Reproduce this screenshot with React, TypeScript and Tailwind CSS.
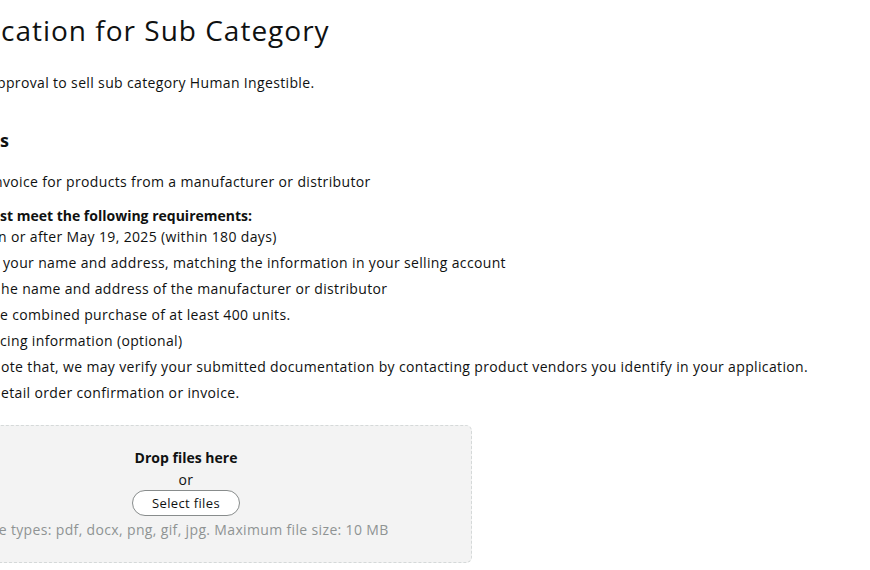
export default function App() {
  // lines of the page as they show in the cropped view
  const items = [
    { text: "n or after May 19, 2025 (within 180 days)", cls: "-ml-[2px]" },
    { text: "your name and address, matching the information in your selling account", cls: "ml-[3px]" },
    { text: "he name and address of the manufacturer or distributor", cls: "ml-[1px]" },
    { text: "e combined purchase of at least 400 units.", cls: "ml-0" },
    { text: "cing information (optional)", cls: "ml-0" },
    { text: "ote that, we may verify your submitted documentation by contacting product vendors you identify in your application.", cls: "ml-[1px]" },
    { text: "etail order confirmation or invoice.", cls: "ml-[1px]" },
  ]

  return (
    <div className="w-[870px] h-[570px] overflow-hidden bg-white text-[#0f1111] font-['Open_Sans',Arial,sans-serif] tracking-[0.35px]">
      <h1 className="mt-[12px] h-[36px] leading-[36px] text-[28px] ml-[1px] tracking-[1px] whitespace-nowrap">
        cation for Sub Category
      </h1>

      <p className="mt-[25px] h-[20px] leading-[20px] text-[14px] -ml-[3px] whitespace-nowrap">
        pproval to sell sub category Human Ingestible.
      </p>

      <h3 className="mt-[35px] h-[24px] leading-[24px] text-[18px] font-bold tracking-normal">s</h3>

      <p className="mt-[20px] h-[20px] leading-[20px] text-[14px] -ml-[6px] whitespace-nowrap">
        nvoice for products from a manufacturer or distributor
      </p>

      <p className="mt-[14px] h-[20px] leading-[20px] text-[14px] font-bold tracking-normal whitespace-nowrap">
        st meet the following requirements:
      </p>

      <ul className="mt-[1px] flex flex-col gap-[6px] text-[14px]">
        {items.map((item, i) => (
          <li key={i} className={`h-[20px] leading-[20px] whitespace-nowrap ${item.cls}`}>
            {item.text}
          </li>
        ))}
      </ul>

      {/* upload area */}
      <div className="mt-[22px] -ml-[100px] w-[572px] h-[138px] rounded-[6px] border border-dashed border-[#d5d9d9] bg-[#f3f3f3] flex flex-col items-center pt-[22px]">
        <div className="h-[20px] leading-[20px] text-[14px] font-bold tracking-normal">Drop files here</div>
        <div className="mt-[2px] h-[20px] leading-[20px] text-[14px]">or</div>
        <button className="w-[108px] h-[26px] rounded-full border border-[#888c8c] bg-white text-[13px] leading-none text-[#0f1111]">
          Select files
        </button>
        <div className="mt-[4px] h-[20px] leading-[20px] text-[14px] text-[#8f9393] whitespace-nowrap">
          File types: pdf, docx, png, gif, jpg. Maximum file size: 10 MB
        </div>
      </div>
    </div>
  )
}
